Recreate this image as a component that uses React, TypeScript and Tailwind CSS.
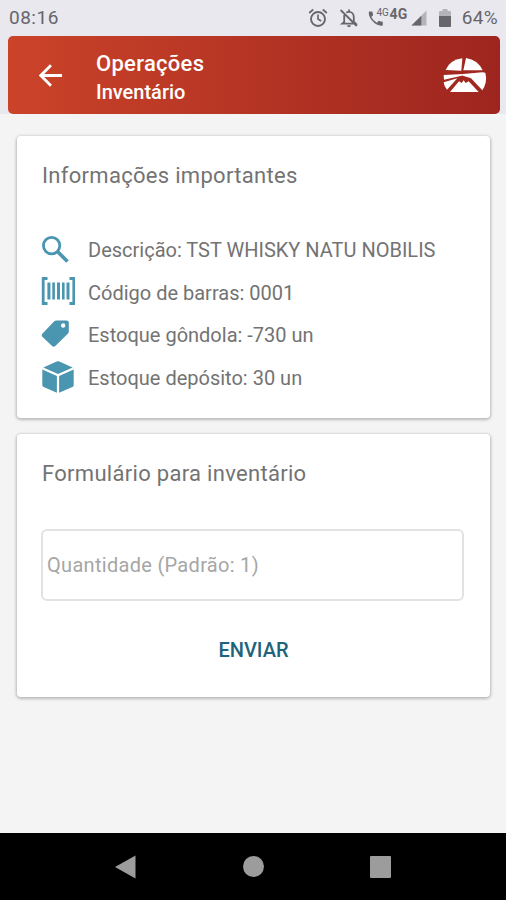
import type { ReactNode } from 'react';

interface InfoItem {
  icon: ReactNode;
  text: string;
}

function SearchIcon() {
  return (
    <svg viewBox="0 0 28 28" className="w-7 h-7 -mt-[3px] -ml-px" fill="none" stroke="#4a95b0">
      <circle cx="10.6" cy="10.6" r="8.2" strokeWidth="2.8" />
      <path d="M16.5 16.5l10 10" strokeWidth="3.6" />
    </svg>
  );
}

function BarcodeIcon() {
  return (
    <svg viewBox="0 0 34 28" className="w-[34px] h-7 -mt-[3px] -ml-px" fill="none" stroke="#4a95b0">
      <path d="M6.500 1.500H2.200v25h4.300M28.500 1.500h4.300v25h-4.300" strokeWidth="2.800" />
      <path d="M7.900 5.500v17M27 5.500v17" strokeWidth="3" />
      <path d="M12.600 5.500v17M22.300 5.500v17" strokeWidth="2.600" />
      <path d="M17.500 5.500v17" strokeWidth="3" />
    </svg>
  );
}

function TagIcon() {
  return (
    <svg viewBox="0 0 28 28" className="w-7 h-7 -mt-[3px] -ml-px">
      <path
        d="M15.500.6H25.200Q27.800.6 27.800 3V11.500q0 1.300-1 2.300L14.300 26q-1.700 1.400-3.200 0L1.300 16.800q-1.300-1.500 0-3L13 1.600Q14.200.6 15.500.6ZM22.200 3.300a2.200 2.200 0 1 0 0 4.400 2.200 2.200 0 0 0 0-4.400Z"
        fill="#4a95b0"
        fillRule="evenodd"
      />
    </svg>
  );
}

function BoxIcon() {
  return (
    <svg viewBox="0 0 32 32" className="w-8 h-8 -mt-[3px] -ml-[0.5px]" fill="#4a95b0">
      <path d="M14.700.5q1.300-.5 2.600 0L30.700 6.500 16 13 1.300 6.500Z" />
      <path d="M.3 8.600 14.900 15v16.700L1.600 26Q.3 25.400.3 24Z" />
      <path d="M31.700 8.600 17.100 15v16.700L30.400 26q1.300-.6 1.300-2Z" />
    </svg>
  );
}

function Logo() {
  return (
    <svg viewBox="0 0 132 105" className="w-11 h-[35px] -ml-px mr-px" fill="#fff">
      <path d="M8 36Q20 6 58 1L55 38Z" />
      <path d="M69 0Q104 5 119 37L61 37Z" />
      <path d="M2 51 60 48 118 43 127 44Q131 58 128 74 125 86 118 97L84 61 62 54Q58 51 53 54L3 65Z" />
      <path d="M2 73 43 61 12 95Q3 86 2 73Z" />
      <path d="M21 102 48 70 56 75 62 67 68 75 77 70 107 102Z" />
    </svg>
  );
}

function StatusBar() {
  return (
    <div className="flex items-center justify-between h-9 pl-[9px] pr-2 text-[#66666b]">
      <span className="text-[19px] tracking-[0.5px]">08:16</span>
      <div className="flex items-center">
        <svg viewBox="0 0 20 20" className="w-5 h-5" fill="none" stroke="currentColor" strokeWidth="1.9">
          <circle cx="10" cy="11" r="7" />
          <path d="M10 6.500V11l3.200 2M1.200 5l4-3.500M18.800 5l-4-3.500" strokeWidth="1.700" />
        </svg>
        <svg viewBox="0 0 20 20" className="w-5 h-5 ml-[11px]" fill="none" stroke="currentColor" strokeWidth="1.8">
          <path d="M5.200 7v7L3.300 15.600h13.400l-1.900-1.900V9c0-3-1.900-5.200-4.800-5.200-1 0-1.900.3-2.700.8M10 1.500v2M1.600 2l16.200 16" />
          <path d="M8 17.200h4q-.4 2-2 2t-2-2Z" fill="currentColor" stroke="none" />
        </svg>
        <div className="relative ml-[9px] w-[21px] h-5">
          <svg viewBox="0 0 17 17" className="w-[16px] h-[17px] mt-[2px]" fill="currentColor">
            <path d="M1 1h3.500q.8 2.500.9 4L3.500 7q1.900 4 6 6l2-2q2 .9 4.200 1V16Q10 17 5 11.500 0 6 1 1Z" />
          </svg>
          <span className="absolute left-[8px] -top-[1px] text-[10px] leading-[11px]">4G</span>
        </div>
        <span className="text-[14px] leading-4 font-bold -mt-[9px] tracking-[0.4px]">4G</span>
        <svg viewBox="0 0 17 17" className="w-4 h-4 ml-[3px]">
          <path d="M16.500.5v16H.5Z" fill="#b4b4b8" />
          <path d="M11 6v10.500H.5Z" fill="currentColor" />
        </svg>
        <svg viewBox="0 0 12 18" className="w-3 h-[18px] ml-3">
          <path d="M3.500 0h5v2H11q1 0 1 1v4H0V3q0-1 1-1h2.500Z" fill="#b4b4b8" />
          <path d="M0 7h12v10q0 1-1 1H1q-1 0-1-1Z" fill="currentColor" />
        </svg>
        <span className="text-[19px] tracking-[0.3px] ml-[11px]">64%</span>
      </div>
    </div>
  );
}

function Header() {
  return (
    <header className="flex items-center h-[78px] ml-2 mr-1.5 pl-[30px] pr-3 rounded-[5px] bg-linear-to-r from-[#cb4329] to-[#9e251f] text-white">
      <svg viewBox="0 0 26 26" className="w-[25px] h-[25px]" fill="none" stroke="#fff" strokeWidth="2.9">
        <path d="M25 13H3.500M13.500 2.300 2.800 13l10.700 10.700" />
      </svg>
      <div className="flex-1 ml-[33px] mt-[5px] font-medium">
        <h1 className="text-[22px] leading-7 tracking-[0.3px]">Operações</h1>
        <p className="text-[20px] leading-7">Inventário</p>
      </div>
      <Logo />
    </header>
  );
}

function Card({ title, className, children }: { title: string; className: string; children: ReactNode }) {
  return (
    <section className={`bg-white rounded-[4px] ml-[17px] mr-4 px-[25px] pt-6 shadow-[0_1px_3px_1px_rgba(0,0,0,0.24)] ${className}`}>
      <h2 className="text-[22px] leading-8 tracking-[0.3px]">{title}</h2>
      {children}
    </section>
  );
}

const items: InfoItem[] = [
  { icon: <SearchIcon />, text: 'Descrição: TST WHISKY NATU NOBILIS' },
  { icon: <BarcodeIcon />, text: 'Código de barras: 0001' },
  { icon: <TagIcon />, text: 'Estoque gôndola: -730 un' },
  { icon: <BoxIcon />, text: 'Estoque depósito: 30 un' },
];

function NavBar() {
  return (
    <nav className="flex items-center justify-between h-[67px] px-[115px] bg-black">
      <svg viewBox="0 0 21 24" className="w-[21px] h-6" fill="#9c9c9c">
        <path d="M0 12 20.500.5v23Z" />
      </svg>
      <div className="w-[21px] h-[21px] rounded-full bg-[#9c9c9c]" />
      <div className="w-[21px] h-[22px] rounded-[1px] bg-[#9c9c9c]" />
    </nav>
  );
}

export default function App() {
  return (
    <div className="flex flex-col h-[900px] w-[506px] overflow-hidden bg-[#f4f4f4] font-[Roboto,sans-serif] text-[#737373]">
      <div className="h-[114px] bg-[#e9e8ef]">
        <StatusBar />
        <Header />
      </div>
      <main className="flex-1 pt-[22px]">
        <Card title="Informações importantes" className="h-[282px]">
          <ul className="mt-[37px]">
            {items.map((item) => (
              <li key={item.text} className="flex items-center h-[42.6px]">
                <span className="w-[46px]">{item.icon}</span>
                <span className="text-[20px]">{item.text}</span>
              </li>
            ))}
          </ul>
        </Card>
        <Card title="Formulário para inventário" className="mt-4 h-[263px]">
          <input
            type="text"
            placeholder="Quantidade (Padrão: 1)"
            className="block w-[423px] h-[72px] mt-[39px] -ml-px px-1 border-2 border-[#e2e2e2] rounded-[6px] text-[20px] tracking-[0.3px] placeholder:text-[#a6a6a6] outline-none"
          />
          <button className="block mx-auto mt-[33px] text-[20px] leading-8 font-medium text-[#20647a]">ENVIAR</button>
        </Card>
      </main>
      <NavBar />
    </div>
  );
}
